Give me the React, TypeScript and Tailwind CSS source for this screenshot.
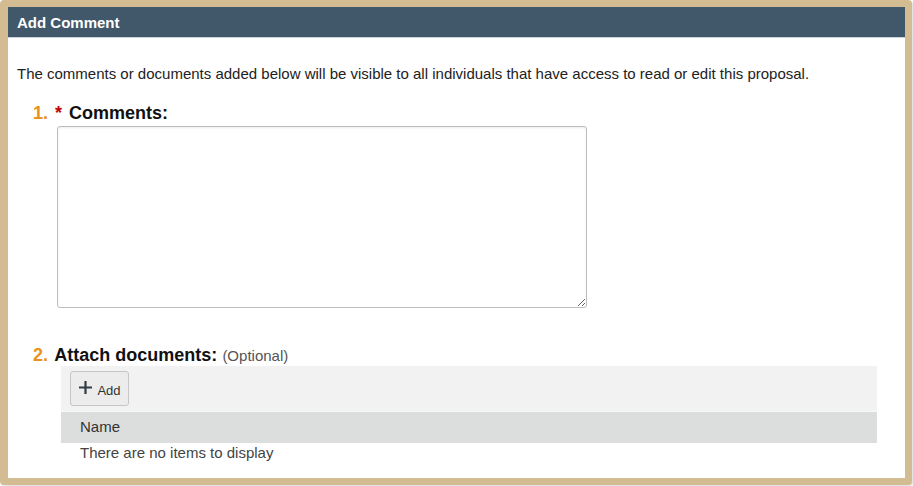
import React from "react";

export default function App() {
  return (
    <div className="w-[913px] h-[486px] bg-white" style={{ fontFamily: '"Liberation Sans", Arial, sans-serif' }}>
      <div className="w-[912px] h-[485px] border-t-[7px] border-l-[8px] border-r-[7px] border-b-[7px] border-[#d3bc91] rounded-[4px] shadow-[1px_1px_2px_rgba(0,0,0,0.15)] flex flex-col bg-white">
        <div className="h-[31px] shrink-0 bg-[#41586a] border-b border-[#c9d2d9] flex items-center px-[9px]">
          <span className="text-white font-bold text-[15px] leading-none">Add Comment</span>
        </div>
        <div className="pl-[9px] pt-[27px]">
          <p className="text-[15px] leading-[18px] text-[#222]">
            The comments or documents added below will be visible to all individuals that have access to read or edit this proposal.
          </p>
          <div className="pl-[16px] mt-[20px]">
            <div className="text-[18px] leading-[21px] font-bold text-[#111]">
              <span className="text-[#e8921c] mr-[2px]">1.</span> <span className="text-[#c40000] mr-[2px]">*</span> Comments:
            </div>
            <div className="pl-[24px] mt-[2px]">
              <textarea className="block w-[530px] h-[182px] border border-[#bdbdbd] rounded-[3px] shadow-[inset_0_1px_2px_rgba(0,0,0,0.08)] bg-white resize" />
            </div>
            <div className="mt-[37px] text-[18px] leading-[21px] font-bold text-[#111]">
              <span className="text-[#e8921c] mr-[2px]">2.</span> Attach documents: <span className="font-normal text-[15px] text-[#555]">(Optional)</span>
            </div>
            <div className="ml-[28px] w-[816px]">
              <div className="h-[46px] bg-[#f2f2f2] border-b border-[#f8f8f8] flex items-center pl-[9px]">
                <button className="h-[35px] w-[59px] border border-[#c6c6c6] rounded-[3px] bg-[#ececec] flex items-center justify-center gap-[4px] text-[#333]">
                  <svg width="15" height="15" viewBox="0 0 15 15" className="mt-[-3px]">
                    <path d="M7.5 1v13M1 7.5h13" stroke="#2f3b45" strokeWidth="2.2" />
                  </svg>
                  <span className="text-[13px] leading-none mt-[3px]">Add</span>
                </button>
              </div>
              <div className="h-[31px] bg-[#dcdedd] flex items-center pl-[19px] text-[15px] text-[#333]">Name</div>
              <div className="pl-[19px] pt-[1px] text-[15px] leading-[18px] text-[#444]">There are no items to display</div>
            </div>
          </div>
        </div>
      </div>
    </div>
  );
}
